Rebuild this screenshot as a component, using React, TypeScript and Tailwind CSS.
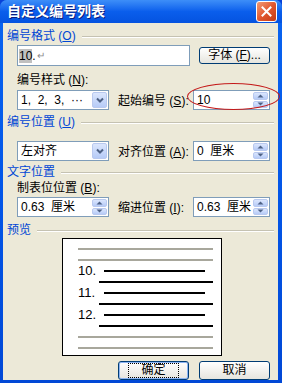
import React from "react";

const font = "font-['Liberation_Sans','Noto_Sans_CJK_SC',sans-serif]";

function Chevron() {
  return (
    <svg width="8" height="6" viewBox="0 0 8 6">
      <path d="M1 1.5 L4 4.5 L7 1.5" fill="none" stroke="#4d6185" strokeWidth="2" />
    </svg>
  );
}

function DropButton() {
  return (
    <div className="flex h-full w-[15px] items-center justify-center rounded-[2px] border border-[#b9c9ef] bg-gradient-to-b from-[#dbe6fd] to-[#b6cbf7]">
      <Chevron />
    </div>
  );
}

function SpinButton() {
  return (
    <div className="flex h-full w-[15px] flex-col gap-px">
      <div className="flex flex-1 items-center justify-center rounded-[2px] border border-[#b9c9ef] bg-gradient-to-b from-[#dbe6fd] to-[#b6cbf7]">
        <svg width="7" height="4" viewBox="0 0 7 4">
          <path d="M0.5 3.5 L3.5 0.5 L6.5 3.5 Z" fill="#4d6185" />
        </svg>
      </div>
      <div className="flex flex-1 items-center justify-center rounded-[2px] border border-[#b9c9ef] bg-gradient-to-b from-[#dbe6fd] to-[#b6cbf7]">
        <svg width="7" height="4" viewBox="0 0 7 4">
          <path d="M0.5 0.5 L3.5 3.5 L6.5 0.5 Z" fill="#4d6185" />
        </svg>
      </div>
    </div>
  );
}

function Field({ text, kind, w }: { text: string; kind: "drop" | "spin"; w: string }) {
  return (
    <div className={`flex h-[20px] items-stretch border border-[#7f9db9] bg-white p-px ${w}`}>
      <span className="flex flex-1 items-center overflow-hidden whitespace-pre pl-[2px] text-[12px] text-black">{text}</span>
      {kind === "drop" ? <DropButton /> : <SpinButton />}
    </div>
  );
}

function Label({ text, k, colon }: { text: string; k: string; colon?: boolean }) {
  return (
    <span className="whitespace-nowrap text-[12px] leading-[14px]">
      {text} (<span className="underline">{k}</span>){colon ? ":" : ""}
    </span>
  );
}

function Group({ children, mt }: { children: React.ReactNode; mt: string }) {
  return (
    <div className={`flex h-[14px] items-center pl-[4px] pr-[4px] ${mt}`}>
      <span className="whitespace-nowrap text-[12px] leading-[14px] text-[#0046d5]">{children}</span>
      <div className="ml-[6px] mt-[2px] flex-1 border-t border-b border-t-[#c5c2b2] border-b-white" />
    </div>
  );
}

function XpButton({ label, def }: { label: string; def?: boolean }) {
  return (
    <div
      className={`flex h-[19px] w-[71px] items-center justify-center rounded-[3px] border border-[#003c74] bg-gradient-to-b from-white to-[#e6e5de] ${
        def ? "shadow-[inset_0_0_0_1px_#8cb4f2]" : ""
      }`}
    >
      <span className={`px-[12px] text-[12px] leading-[13px] ${def ? "outline outline-1 outline-dotted outline-black" : ""}`}>
        {label}
      </span>
    </div>
  );
}

function PreviewRow({ num }: { num: string }) {
  return (
    <>
      <div className="flex h-[11px] items-center">
        <span className="w-[26px] text-[13px] leading-[11px]">{num}</span>
        <div className="h-[2px] w-[101px] bg-black" />
      </div>
      <div className="flex h-[11px] items-center pl-[21px]">
        <div className="h-[2px] w-[114px] bg-black" />
      </div>
    </>
  );
}

export default function App() {
  return (
    <div className={`h-[383px] w-[282px] overflow-hidden bg-[#0842d8] ${font}`}>
      <div className="flex h-[383px] flex-col rounded-t-[7px] bg-gradient-to-b from-[#0a64f0] via-[#0356e8] to-[#0148d6]">
        {/* title bar */}
        <div className="flex h-[30px] items-center rounded-t-[7px] bg-gradient-to-b from-[#3d8ef8] via-[#0a5eec] to-[#0553e0] pl-[7px] pr-[5px]">
          <span className="flex-1 text-[14px] font-bold text-white [text-shadow:1px_1px_0_#0a1e80]">自定义编号列表</span>
          <div className="flex h-[21px] w-[21px] items-center justify-center rounded-[3px] border border-white bg-gradient-to-br from-[#f09a74] via-[#e2582f] to-[#c23a15]">
            <svg width="11" height="11" viewBox="0 0 11 11">
              <path d="M1.5 1.5 L9.5 9.5 M9.5 1.5 L1.5 9.5" stroke="white" strokeWidth="2" strokeLinecap="square" />
            </svg>
          </div>
        </div>

        {/* body */}
        <div className="relative mx-[3px] mr-[4px] mb-[3px] flex flex-1 flex-col bg-[#ece9d8] text-black">
          <Group mt="mt-[6px]">
            编号格式 (<span className="underline">O</span>)
          </Group>

          <div className="mt-[2px] flex items-center pl-[14px]">
            <div className="flex h-[21px] w-[173px] items-center border border-[#7f9db9] bg-white pl-[1px]">
              <span className="bg-[#c0c0c0] text-[12px] leading-[14px]">10</span>
              <span className="text-[12px] leading-[14px]">.</span>
              <span className="ml-px text-[10px] leading-[12px] text-[#8c8c8c]">↵</span>
            </div>
            <div className="ml-[9px] flex h-[17px] w-[71px] items-center justify-center rounded-[3px] border border-[#003c74] bg-gradient-to-b from-white to-[#e6e5de] text-[12px] leading-[13px]">
              字体 (<span className="underline">F</span>)...
            </div>
          </div>

          <div className="mt-[7px] flex h-[14px] items-center pl-[14px]">
            <Label text="编号样式" k="N" colon />
          </div>

          <div className="mt-[1px] flex items-center pl-[14px]">
            <Field text="1,  2,  3,  ···" kind="drop" w="w-[92px]" />
            <div className="ml-[9px] w-[75px]">
              <Label text="起始编号" k="S" colon />
            </div>
            <Field text="10" kind="spin" w="w-[77px]" />
          </div>

          <Group mt="mt-[3px]">
            编号位置 (<span className="underline">U</span>)
          </Group>

          <div className="mt-[10px] flex items-center pl-[14px]">
            <Field text="左对齐" kind="drop" w="w-[92px]" />
            <div className="ml-[9px] w-[75px]">
              <Label text="对齐位置" k="A" colon />
            </div>
            <Field text="0  厘米" kind="spin" w="w-[77px]" />
          </div>

          <Group mt="mt-[2px]">文字位置</Group>

          <div className="mt-[2px] flex h-[14px] items-center pl-[14px]">
            <Label text="制表位位置" k="B" colon />
          </div>

          <div className="flex items-center pl-[14px]">
            <Field text="0.63  厘米" kind="spin" w="w-[92px]" />
            <div className="ml-[9px] w-[75px]">
              <Label text="缩进位置" k="I" colon />
            </div>
            <Field text="0.63  厘米" kind="spin" w="w-[77px]" />
          </div>

          <Group mt="mt-[4px]">预览</Group>

          <div className="ml-[59px] mt-[1px] flex h-[118px] w-[160px] flex-col border border-black bg-white pl-[15px] pt-[4px]">
            <div className="flex h-[11px] items-center">
              <div className="h-[2px] w-[135px] bg-[#a8a79c]" />
            </div>
            <div className="flex h-[11px] items-center">
              <div className="h-[2px] w-[135px] bg-[#a8a79c]" />
            </div>
            <PreviewRow num="10." />
            <PreviewRow num="11." />
            <PreviewRow num="12." />
            <div className="flex h-[11px] items-center">
              <div className="h-[2px] w-[135px] bg-[#a8a79c]" />
            </div>
            <div className="flex h-[11px] items-center">
              <div className="h-[2px] w-[135px] bg-[#a8a79c]" />
            </div>
          </div>

          <div className="mt-[5px] flex gap-[10px] pl-[115px]">
            <XpButton label="确定" def />
            <XpButton label="取消" />
          </div>

          {/* red annotation ellipse */}
          <div className="absolute left-[184px] top-[60px] h-[27px] w-[93px] rounded-[50%] border border-[#c41a1a]" />
        </div>
      </div>
    </div>
  );
}
